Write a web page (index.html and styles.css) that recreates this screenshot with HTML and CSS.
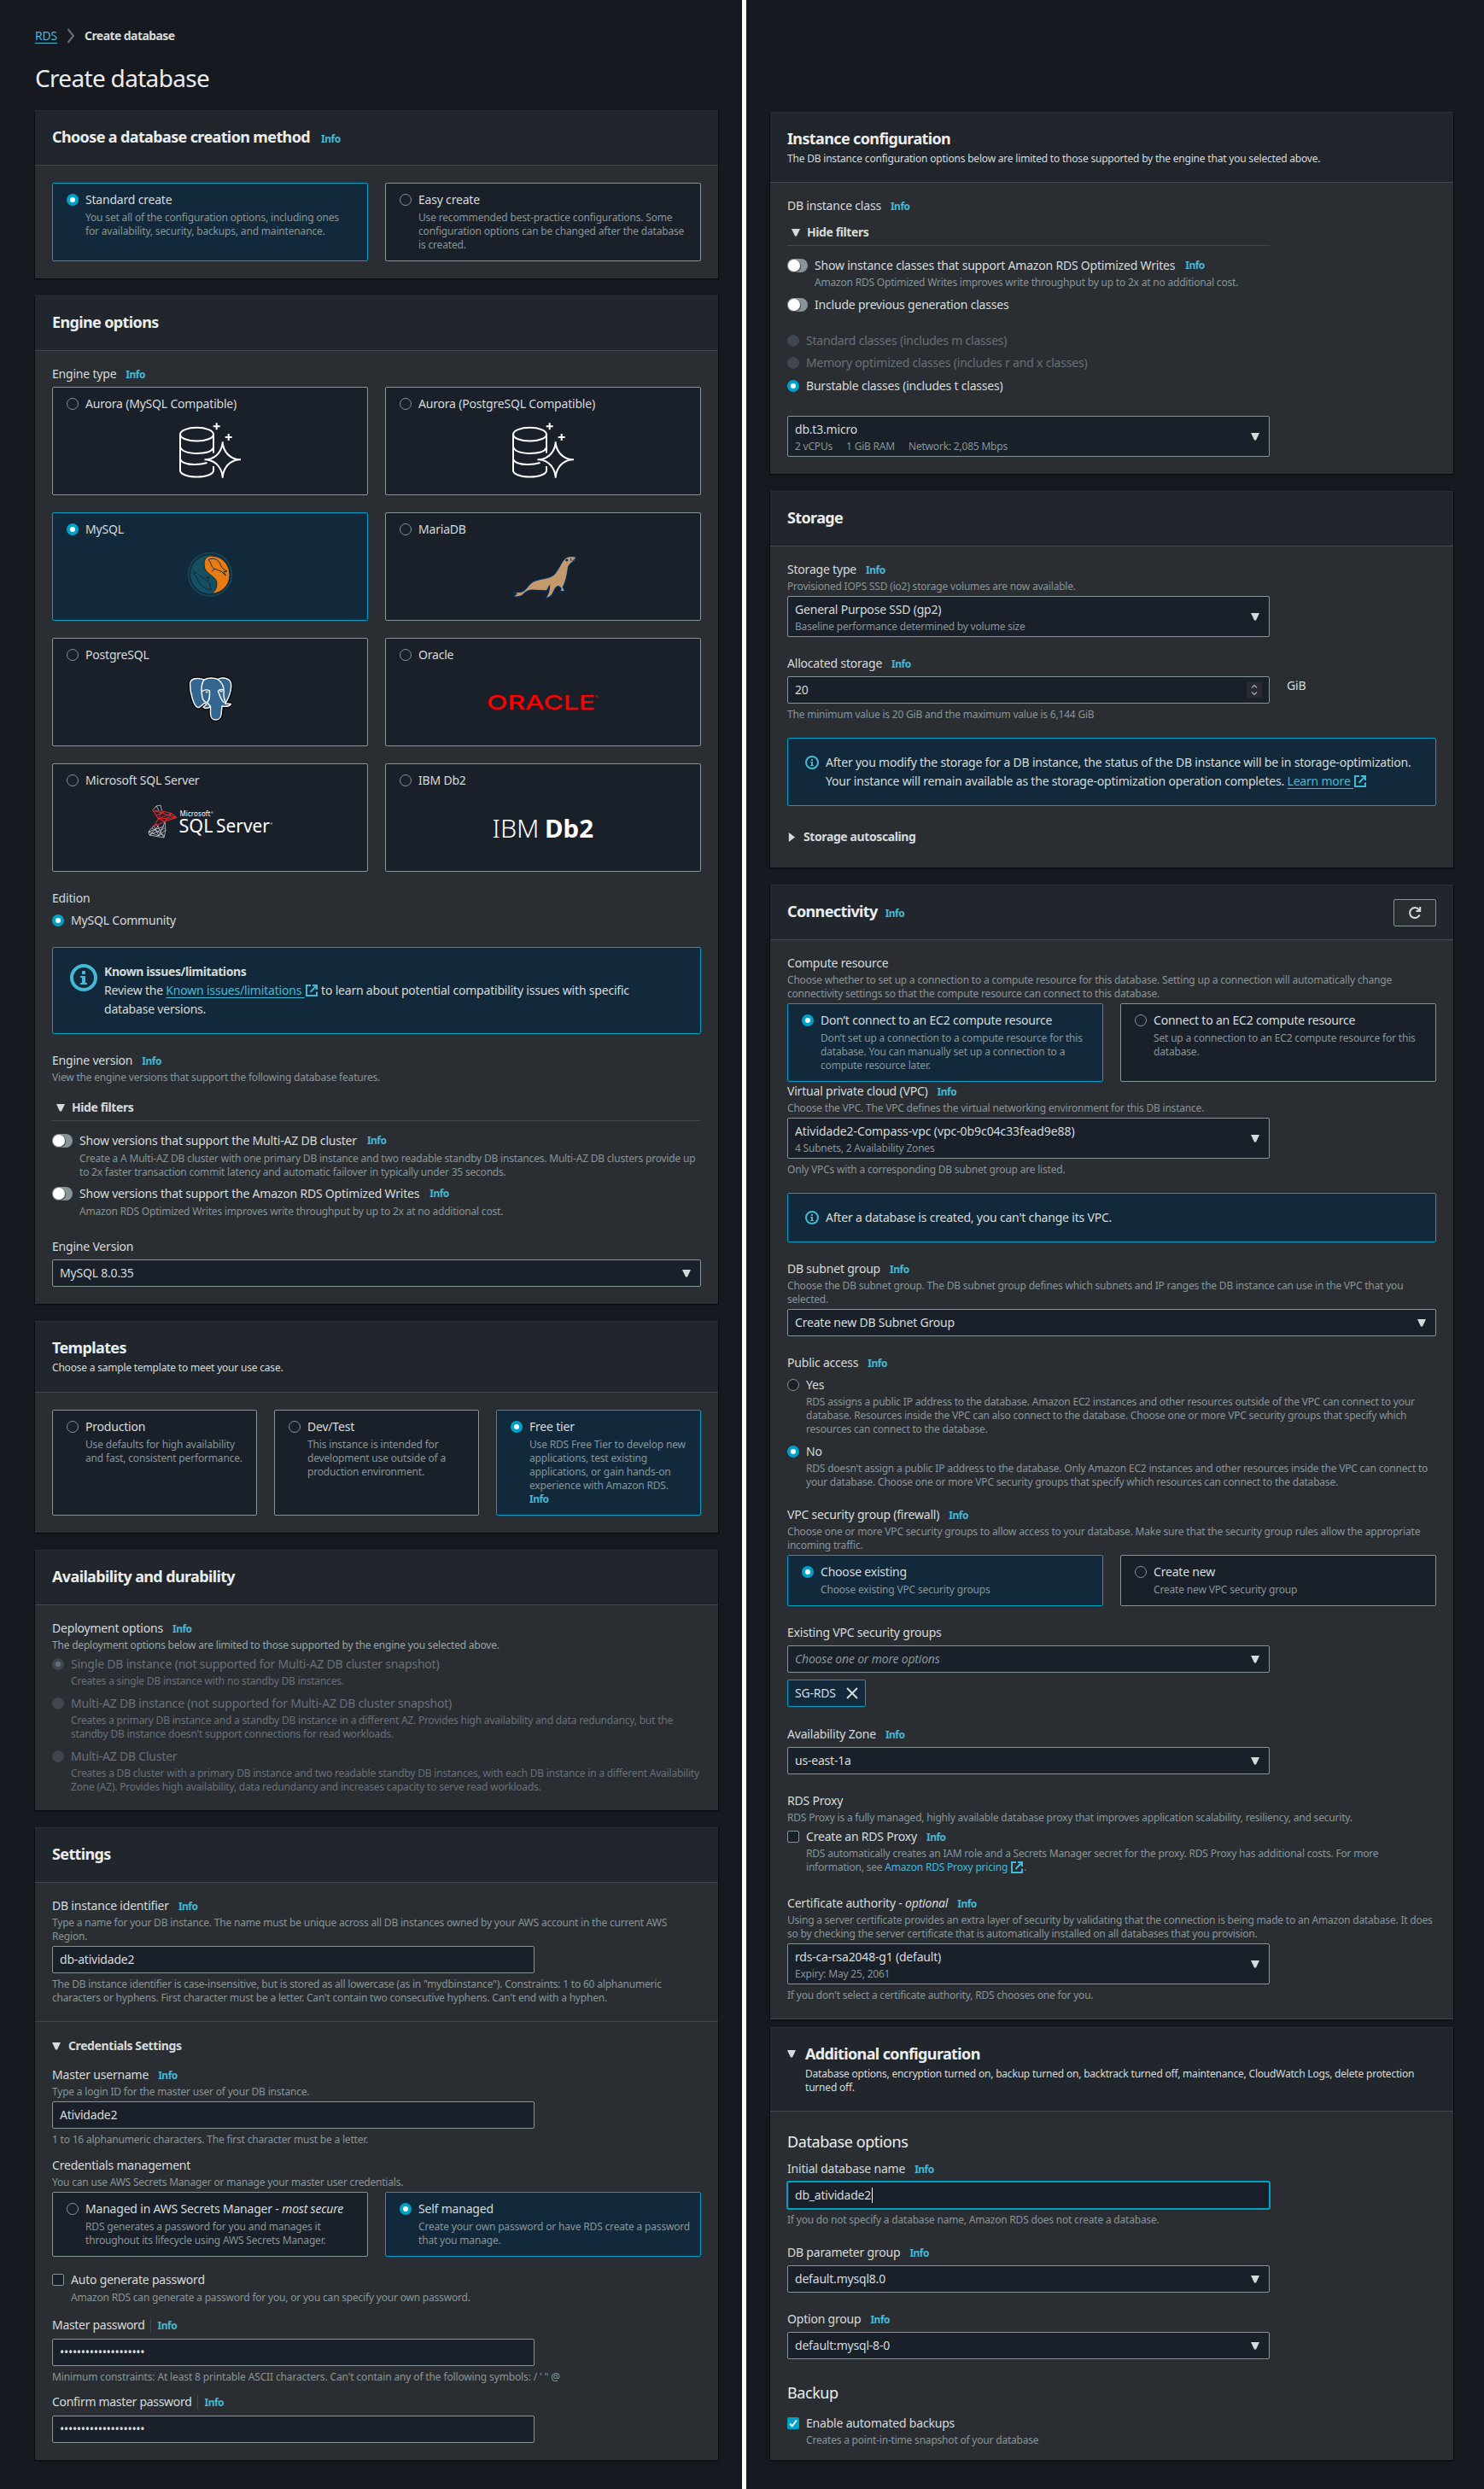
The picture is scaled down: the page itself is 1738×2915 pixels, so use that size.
FILE: index.html
```html
<!DOCTYPE html>
<html lang="en">
<head>
<meta charset="utf-8">
<title>Create database</title>
<link rel="stylesheet" href="styles.css">
</head>
<body>
<svg class="defs" aria-hidden="true">
  <symbol id="ext" viewBox="0 0 16 16"><path d="M7 2H2v12h12V9.5M9 2h5v5M14 2 6.5 10" fill="none" stroke="currentColor" stroke-width="2"/></symbol>
  <symbol id="info" viewBox="0 0 16 16"><circle cx="8" cy="8" r="7" fill="none" stroke="currentColor" stroke-width="2"/><path d="M7 4h2v2H7zM6 7h3v4h1v1H6v-1h1V8H6z" fill="currentColor"/></symbol>
  <symbol id="down" viewBox="0 0 10 9"><path d="M0 0h10L6 8.5H4z" fill="currentColor"/></symbol>
  <symbol id="aurora" viewBox="0 0 160 70">
    <g fill="none" stroke="#fff" stroke-width="2">
      <ellipse cx="64.5" cy="15.7" rx="19.5" ry="7.9"/>
      <path d="M45 15.7V58c0 4 8 7.5 19.500 7.500S84 62 84 58v-5M84 15.700V37.500"/>
      <path d="M45 30.500c2 5 9 7.400 19.500 7.400S82 35.500 84 31.500M45 45c2 4.500 9 6 17 6 6 0 10-.7 14.500-2"/>
      <path d="M94.700 26.500C92.700 37 86.500 43.500 76.500 45.300 86.500 47.100 92.700 54 94.700 64.500 96.700 54 103 47.100 113 45.300 103 43.500 96.700 37 94.700 26.500Z"/>
      <path d="M94.700 24.300v4M94.700 62.500v4.200M73.500 45.300h4M112 45.300h4M87.700 2.300v8M83.700 6.300h8M101.700 15v8M97.700 19h8"/>
    </g>
  </symbol>
</svg>

<main class="column column-left">
  <nav class="crumbs"><a class="link">RDS</a><svg class="chev" viewBox="0 0 10 22"><path d="M1.500 3 8 11 1.500 19" fill="none" stroke="#687078" stroke-width="2"/></svg><b>Create database</b></nav>
  <h1>Create database</h1>

  <section class="panel">
    <header><h2>Choose a database creation method <a class="info">Info</a></h2></header>
    <div class="body">
      <div class="cards two mt-4">
        <div class="card on"><div class="opt"><i class="radio on"></i>Standard create</div><p>You set all of the configuration options, including ones<br>for availability, security, backups, and maintenance.</p></div>
        <div class="card"><div class="opt"><i class="radio"></i>Easy create</div><p>Use recommended best-practice configurations. Some<br>configuration options can be changed after the database<br>is created.</p></div>
      </div>
    </div>
  </section>

  <section class="panel">
    <header><h2>Engine options</h2></header>
    <div class="body">
      <div class="label">Engine type <a class="info">Info</a></div>
      <div class="cards two engines mt-4">
        <div class="card"><div class="opt"><i class="radio"></i>Aurora (MySQL Compatible)</div><svg class="logo"><use href="#aurora"/></svg></div>
        <div class="card"><div class="opt"><i class="radio"></i>Aurora (PostgreSQL Compatible)</div><svg class="logo"><use href="#aurora"/></svg></div>
        <div class="card on"><div class="opt"><i class="radio on"></i>MySQL</div>
          <svg class="logo" viewBox="0 0 160 70">
            <circle cx="80" cy="32.700" r="25.200" fill="#12293b" stroke="#15495c" stroke-width="1.600"/>
            <circle cx="80" cy="32.700" r="22.800" fill="#14505f"/>
            <path d="M81 11C94 11 103 21 103 33 103 46 94 54.500 82 55.300 88 51 90 42.500 85.500 37.500 81 32.500 73 30 73 21 73 15 76 11 81 11Z" fill="#e97b13" stroke="#12293b" stroke-width="1"/>
            <g fill="none" stroke="#12293b" stroke-width="1"><path d="M78 15.500C84 12.500 90 15 92.500 22 94 26 97 27.500 100 29L96 29.500 98.500 34 93.500 29.500C89 27.500 85 26.500 82.500 24 81 20.500 80.500 17.500 78 15.500ZM85 26 82 29.500"/><path d="M81.500 50.500C75 51 68.500 46 66 40 64.500 35 62 33 59.500 31L64 31.500 60.500 28M66 32C71 38 77 38.500 79.500 44 80 47 80.500 49 81.500 50.500M75 37.500 78.500 35.500 77.500 40"/></g>
          </svg></div>
        <div class="card"><div class="opt"><i class="radio"></i>MariaDB</div>
          <svg class="logo" viewBox="0 0 160 70">
            <path d="M118.700 12 115 11.500C111 11 107 12 104 15.500 100 20.500 98 28 92.300 33.300 88 37 82 37.500 75.700 38.500 70 39.500 66 42 63 45.500 60 49.500 58 52.500 54.500 53L43.700 53.500 49 55.500 44.700 58.300C48 60 53 59 56 57 59 54 62 51.500 66 51.300L84 52C86 51 86.500 48 87.500 46 87.500 53 85.500 57 82.300 60.700 87 60.500 91 57 92.500 53 94 49 95 47.500 98 46.500L101 49 100 52.700H105.700L103.500 47.500C107 41 108.500 33 109.500 25 110 21 113 19 117.500 16.500Z" fill="#c49a6c" stroke="#002b64" stroke-width="1.400" stroke-linejoin="round"/>
            <circle cx="107.800" cy="16" r="1.600" fill="#11264a"/><path d="M117 11.500 119 13.500 114 17.500M112.500 13.500 113 17" fill="none" stroke="#12356c" stroke-width="1"/>
          </svg></div>
        <div class="card"><div class="opt"><i class="radio"></i>PostgreSQL</div>
          <svg class="logo" viewBox="0 0 160 70">
            <g stroke-linejoin="round" stroke-linecap="round">
              <path d="M73 9C66 6.500 57 6.500 56.500 14 56.500 25 61 40 65.500 41.500 68 42.500 70 39 73.500 36.500L76 38 72 41C74 43.500 78 42.500 80.500 40.500V49C80.500 58.500 92 58 93 50L94 40C99 41 103 39.500 104.500 37.500L98 37C102 30 105.500 20 104.500 13.500 103 6 93 6 89 8.500 84 6.500 78 6.500 73 9Z" fill="#336791" stroke="#000" stroke-width="4"/>
              <path d="M73 9C66 6.500 57 6.500 56.500 14 56.500 25 61 40 65.500 41.500 68 42.500 70 39 73.500 36.500L76 38 72 41C74 43.500 78 42.500 80.500 40.500V49C80.500 58.500 92 58 93 50L94 40C99 41 103 39.500 104.500 37.500L98 37C102 30 105.500 20 104.500 13.500 103 6 93 6 89 8.500 84 6.500 78 6.500 73 9Z" fill="#336791" stroke="#fff" stroke-width="1.400"/>
              <path d="M73 9C69 15 70 25 71 30 72 34 75 36 76.500 35.500 80 33 79.500 28 79.500 22 77 20.500 74 20.500 71 22.500M89 8.500C95 13 97 19 96 26 95.500 30 98 33 98 37M96 21C93 20 91 20.500 89.500 22.500 91 27 93 33 96 35.500M76.500 35.500 80.500 40.500M75.500 23.500h1.500M92.500 22.800h1.500" fill="none" stroke="#fff" stroke-width="1.400"/>
            </g>
          </svg></div>
        <div class="card"><div class="opt"><i class="radio"></i>Oracle</div>
          <svg class="logo" viewBox="0 0 160 70"><text class="oracle" x="14" y="44" textLength="127" lengthAdjust="spacingAndGlyphs">ORACLE</text><text class="oracle reg" x="141" y="31">®</text></svg></div>
        <div class="card"><div class="opt"><i class="radio"></i>Microsoft SQL Server</div>
          <svg class="logo" viewBox="0 0 160 70">
            <g fill="none" stroke="#c9ced2" stroke-width=".8"><path d="M13.500 14 17 10 22 9 23.500 15M17 10l3 5M14 33 8 40 9 44 26 47 28 38 27 28M14 33l6 12M8 40l18-6M9 44l18-8M20 33 9 44M26 47 17 31M12 36l15 9M27 29 20 45M8 40l12 5 8-7"/></g>
            <g fill="none" stroke="#e0262d" stroke-width="1.100"><path d="M13 15 40.500 23.500 27 28 14 34 19.500 25ZM13 15 24 16 35 18.500 40.500 23.500M24 16 19.500 25 35 18.500M19.500 25 27 28 35 18.500M19.500 25l20-1.500M17 21l9-4"/></g>
            <text class="ms" x="44.500" y="22.300" textLength="36">Microsoft</text><text class="ms reg" x="81" y="19">®</text>
            <text class="sql" x="43.500" y="41.300" textLength="40" lengthAdjust="spacingAndGlyphs">SQL</text><text class="sql" x="87" y="41.300" textLength="63" lengthAdjust="spacingAndGlyphs">Server</text><text class="ms reg" x="150.500" y="32">®</text>
          </svg></div>
        <div class="card"><div class="opt"><i class="radio"></i>IBM Db2</div>
          <svg class="logo" viewBox="0 0 160 70"><text class="ibm" x="20.500" y="46.700" textLength="55" lengthAdjust="spacingAndGlyphs">IBM</text><text class="ibm strong" x="82" y="46.700" textLength="57" lengthAdjust="spacingAndGlyphs">Db2</text></svg></div>
      </div>
      <div class="label mt-20">Edition</div>
      <div class="opt mt-3"><i class="radio on"></i>MySQL Community</div>
      <div class="alert mt-21"><svg class="ic big"><use href="#info"/></svg><div><b>Known issues/limitations</b><br>Review the <a class="link">Known issues/limitations </a><svg class="ext"><use href="#ext"/></svg> to learn about potential compatibility issues with specific<br>database versions.</div></div>
      <div class="label mt-20">Engine version <a class="info">Info</a></div>
      <p class="desc">View the engine versions that support the following database features.</p>
      <div class="filters mt-17"><svg class="tri"><use href="#down"/></svg>Hide filters</div>
      <div class="toggle-row mt-11"><i class="toggle"></i>Show versions that support the Multi-AZ DB cluster <a class="info">Info</a></div>
      <p class="desc in-toggle mt-2">Create a A Multi-AZ DB cluster with one primary DB instance and two readable standby DB instances. Multi-AZ DB clusters provide up<br>to 2x faster transaction commit latency and automatic failover in typically under 35 seconds.</p>
      <div class="toggle-row mt-6"><i class="toggle"></i>Show versions that support the Amazon RDS Optimized Writes <a class="info">Info</a></div>
      <p class="desc in-toggle mt-2">Amazon RDS Optimized Writes improves write throughput by up to 2x at no additional cost.</p>
      <div class="label mt-23">Engine Version</div>
      <div class="field wide mt-4">MySQL 8.0.35<svg class="tri"><use href="#down"/></svg></div>
    </div>
  </section>

  <section class="panel">
    <header class="tall"><h2>Templates</h2><p>Choose a sample template to meet your use case.</p></header>
    <div class="body">
      <div class="cards three mt-4">
        <div class="card"><div class="opt"><i class="radio"></i>Production</div><p>Use defaults for high availability<br>and fast, consistent performance.</p></div>
        <div class="card"><div class="opt"><i class="radio"></i>Dev/Test</div><p>This instance is intended for<br>development use outside of a<br>production environment.</p></div>
        <div class="card on"><div class="opt"><i class="radio on"></i>Free tier</div><p>Use RDS Free Tier to develop new<br>applications, test existing<br>applications, or gain hands-on<br>experience with Amazon RDS.<br><a class="info">Info</a></p></div>
      </div>
    </div>
  </section>

  <section class="panel">
    <header><h2>Availability and durability</h2></header>
    <div class="body">
      <div class="label">Deployment options <a class="info">Info</a></div>
      <p class="desc light">The deployment options below are limited to those supported by the engine you selected above.</p>
      <div class="opt off mt-3"><i class="radio off picked"></i>Single DB instance (not supported for Multi-AZ DB cluster snapshot)</div>
      <p class="desc off in-opt mt-1">Creates a single DB instance with no standby DB instances.</p>
      <div class="opt off mt-7"><i class="radio off"></i>Multi-AZ DB instance (not supported for Multi-AZ DB cluster snapshot)</div>
      <p class="desc off in-opt mt-1">Creates a primary DB instance and a standby DB instance in a different AZ. Provides high availability and data redundancy, but the<br>standby DB instance doesn't support connections for read workloads.</p>
      <div class="opt off mt-7"><i class="radio off"></i>Multi-AZ DB Cluster</div>
      <p class="desc off in-opt mt-1">Creates a DB cluster with a primary DB instance and two readable standby DB instances, with each DB instance in a different Availability<br>Zone (AZ). Provides high availability, data redundancy and increases capacity to serve read workloads.</p>
    </div>
  </section>

  <section class="panel">
    <header><h2>Settings</h2></header>
    <div class="body">
      <div class="label">DB instance identifier <a class="info">Info</a></div>
      <p class="desc">Type a name for your DB instance. The name must be unique across all DB instances owned by your AWS account in the current AWS<br>Region.</p>
      <div class="field mt-4">db-atividade2</div>
      <p class="desc mt-4">The DB instance identifier is case-insensitive, but is stored as all lowercase (as in "mydbinstance"). Constraints: 1 to 60 alphanumeric<br>characters or hyphens. First character must be a letter. Can't contain two consecutive hyphens. Can't end with a hyphen.</p>
    </div>
    <div class="body split">
      <div class="expander"><svg class="tri"><use href="#down"/></svg>Credentials Settings</div>
      <div class="label mt-12">Master username <a class="info">Info</a></div>
      <p class="desc">Type a login ID for the master user of your DB instance.</p>
      <div class="field mt-4">Atividade2</div>
      <p class="desc mt-4">1 to 16 alphanumeric characters. The first character must be a letter.</p>
      <div class="label mt-12">Credentials management</div>
      <p class="desc">You can use AWS Secrets Manager or manage your master user credentials.</p>
      <div class="cards two mt-4">
        <div class="card"><div class="opt"><i class="radio"></i><span>Managed in AWS Secrets Manager - <em>most secure</em></span></div><p>RDS generates a password for you and manages it<br>throughout its lifecycle using AWS Secrets Manager.</p></div>
        <div class="card on"><div class="opt"><i class="radio on"></i>Self managed</div><p>Create your own password or have RDS create a password<br>that you manage.</p></div>
      </div>
      <div class="opt mt-15"><i class="check"></i>Auto generate password</div>
      <p class="desc in-opt mt-2">Amazon RDS can generate a password for you, or you can specify your own password.</p>
      <div class="label barred mt-14">Master password <a class="info">Info</a></div>
      <div class="field dots mt-5">••••••••••••••••••••</div>
      <p class="desc wider mt-4">Minimum constraints: At least 8 printable ASCII characters. Can't contain any of the following symbols: / ' " @</p>
      <div class="label barred mt-11">Confirm master password <a class="info">Info</a></div>
      <div class="field dots mt-5">••••••••••••••••••••</div>
    </div>
  </section>
</main>

<div class="gutter"></div>

<main class="column column-right">
  <section class="panel">
    <header><h2>Instance configuration</h2><p>The DB instance configuration options below are limited to those supported by the engine that you selected above.</p></header>
    <div class="body">
      <div class="label">DB instance class <a class="info">Info</a></div>
      <div class="filters short mt-9"><svg class="tri"><use href="#down"/></svg>Hide filters</div>
      <div class="toggle-row mt-11"><i class="toggle"></i>Show instance classes that support Amazon RDS Optimized Writes <a class="info">Info</a></div>
      <p class="desc in-toggle mt-1">Amazon RDS Optimized Writes improves write throughput by up to 2x at no additional cost.</p>
      <div class="toggle-row mt-7"><i class="toggle"></i>Include previous generation classes</div>
      <div class="opt off mt-20"><i class="radio off"></i>Standard classes (includes m classes)</div>
      <div class="opt off mt-4"><i class="radio off"></i>Memory optimized classes (includes r and x classes)</div>
      <div class="opt mt-5"><i class="radio on"></i>Burstable classes (includes t classes)</div>
      <div class="field double mt-25"><div>db.t3.micro<p class="desc tags"><span>2 vCPUs</span><span>1 GiB RAM</span><span>Network: 2,085 Mbps</span></p></div><svg class="tri"><use href="#down"/></svg></div>
    </div>
  </section>

  <section class="panel">
    <header><h2>Storage</h2></header>
    <div class="body storage">
      <div class="label">Storage type <a class="info">Info</a></div>
      <p class="desc">Provisioned IOPS SSD (io2) storage volumes are now available.</p>
      <div class="field double mt-4"><div>General Purpose SSD (gp2)<p class="desc">Baseline performance determined by volume size</p></div><svg class="tri"><use href="#down"/></svg></div>
      <div class="label mt-20">Allocated storage <a class="info">Info</a></div>
      <div class="unit-row mt-4"><div class="field">20<span class="spinner"><svg viewBox="0 0 18 18"><path d="M6 6.500 9 3.500l3 3M6 11.500l3 3 3-3" fill="none" stroke="#9a9aa2" stroke-width="1.500"/></svg></span></div><span>GiB</span></div>
      <p class="desc mt-4">The minimum value is 20 GiB and the maximum value is 6,144 GiB</p>
      <div class="alert mt-20"><svg class="ic"><use href="#info"/></svg><div>After you modify the storage for a DB instance, the status of the DB instance will be in storage-optimization.<br>Your instance will remain available as the storage-optimization operation completes. <a class="link">Learn more </a><svg class="ext"><use href="#ext"/></svg></div></div>
      <div class="expander mt-25"><svg class="tri side" viewBox="0 0 11 12"><path d="M2 0 10 6 2 12z" fill="currentColor"/></svg>Storage autoscaling</div>
    </div>
  </section>

  <section class="panel linked">
    <header class="bar"><h2 class="tight">Connectivity <a class="info">Info</a></h2><button class="refresh" aria-label="Refresh"><svg viewBox="0 0 16 16"><path d="M13.600 10.500A6 6 0 1 1 12.800 4.300L14 5.800M14.200 1v5H9.500" fill="none" stroke="currentColor" stroke-width="2"/></svg></button></header>
    <div class="body">
      <div class="label">Compute resource</div>
      <p class="desc">Choose whether to set up a connection to a compute resource for this database. Setting up a connection will automatically change<br>connectivity settings so that the compute resource can connect to this database.</p>
      <div class="cards two mt-4">
        <div class="card on"><div class="opt"><i class="radio on"></i>Don’t connect to an EC2 compute resource</div><p>Don’t set up a connection to a compute resource for this<br>database. You can manually set up a connection to a<br>compute resource later.</p></div>
        <div class="card"><div class="opt"><i class="radio"></i>Connect to an EC2 compute resource</div><p>Set up a connection to an EC2 compute resource for this<br>database.</p></div>
      </div>
      <div class="label">Virtual private cloud (VPC) <a class="info">Info</a></div>
      <p class="desc">Choose the VPC. The VPC defines the virtual networking environment for this DB instance.</p>
      <div class="field double mt-4"><div><span class="ident">Atividade2-Compass-vpc (vpc-0b9c04c33fead9e88)</span><p class="desc">4 Subnets, 2 Availability Zones</p></div><svg class="tri"><use href="#down"/></svg></div>
      <p class="desc mt-4">Only VPCs with a corresponding DB subnet group are listed.</p>
      <div class="alert mt-20"><svg class="ic"><use href="#info"/></svg><div>After a database is created, you can't change its VPC.</div></div>
      <div class="label mt-20">DB subnet group <a class="info">Info</a></div>
      <p class="desc">Choose the DB subnet group. The DB subnet group defines which subnets and IP ranges the DB instance can use in the VPC that you<br>selected.</p>
      <div class="field wide mt-4">Create new DB Subnet Group<svg class="tri"><use href="#down"/></svg></div>
      <div class="label mt-20">Public access <a class="info">Info</a></div>
      <div class="opt mt-3"><i class="radio"></i>Yes</div>
      <p class="desc in-opt mt-1">RDS assigns a public IP address to the database. Amazon EC2 instances and other resources outside of the VPC can connect to your<br>database. Resources inside the VPC can also connect to the database. Choose one or more VPC security groups that specify which<br>resources can connect to the database.</p>
      <div class="opt mt-7"><i class="radio on"></i>No</div>
      <p class="desc in-opt mt-1">RDS doesn't assign a public IP address to the database. Only Amazon EC2 instances and other resources inside the VPC can connect to<br>your database. Choose one or more VPC security groups that specify which resources can connect to the database.</p>
      <div class="label mt-20">VPC security group (firewall) <a class="info">Info</a></div>
      <p class="desc">Choose one or more VPC security groups to allow access to your database. Make sure that the security group rules allow the appropriate<br>incoming traffic.</p>
      <div class="cards two mt-4">
        <div class="card on"><div class="opt"><i class="radio on"></i>Choose existing</div><p>Choose existing VPC security groups</p></div>
        <div class="card"><div class="opt"><i class="radio"></i>Create new</div><p>Create new VPC security group</p></div>
      </div>
      <div class="label mt-20">Existing VPC security groups</div>
      <div class="field mt-4"><em class="placeholder">Choose one or more options</em><svg class="tri"><use href="#down"/></svg></div>
      <div class="token mt-8">SG-RDS<svg viewBox="0 0 14 14"><path d="M1 1l12 12M13 1 1 13" stroke="currentColor" stroke-width="2"/></svg></div>
      <div class="label mt-21">Availability Zone <a class="info">Info</a></div>
      <div class="field mt-4">us-east-1a<svg class="tri"><use href="#down"/></svg></div>
      <div class="label mt-20">RDS Proxy</div>
      <p class="desc">RDS Proxy is a fully managed, highly available database proxy that improves application scalability, resiliency, and security.</p>
      <div class="opt mt-3"><i class="check"></i><span class="label">Create an RDS Proxy <a class="info">Info</a></span></div>
      <p class="desc in-opt mt-1">RDS automatically creates an IAM role and a Secrets Manager secret for the proxy. RDS Proxy has additional costs. For more<br>information, see <a class="plain">Amazon RDS Proxy pricing <svg class="ext"><use href="#ext"/></svg></a>.</p>
      <div class="label mt-24"><span>Certificate authority - <em>optional</em></span> <a class="info">Info</a></div>
      <p class="desc">Using a server certificate provides an extra layer of security by validating that the connection is being made to an Amazon database. It does<br>so by checking the server certificate that is automatically installed on all databases that you provision.</p>
      <div class="field double mt-4"><div>rds-ca-rsa2048-g1 (default)<p class="desc">Expiry: May 25, 2061</p></div><svg class="tri"><use href="#down"/></svg></div>
      <p class="desc mt-4">If you don't select a certificate authority, RDS chooses one for you.</p>
    </div>
  </section>

  <section class="panel">
    <header class="with-tri"><svg class="tri"><use href="#down"/></svg><div><h2>Additional configuration</h2><p>Database options, encryption turned on, backup turned on, backtrack turned off, maintenance, CloudWatch Logs, delete protection<br>turned off.</p></div></header>
    <div class="body additional">
      <h3 class="mt-8">Database options</h3>
      <div class="label mt-10">Initial database name <a class="info">Info</a></div>
      <div class="field focus mt-4">db_atividade2<span class="caret"></span></div>
      <p class="desc mt-4">If you do not specify a database name, Amazon RDS does not create a database.</p>
      <div class="label mt-20">DB parameter group <a class="info">Info</a></div>
      <div class="field mt-4">default.mysql8.0<svg class="tri"><use href="#down"/></svg></div>
      <div class="label mt-20">Option group <a class="info">Info</a></div>
      <div class="field mt-4">default:mysql-8-0<svg class="tri"><use href="#down"/></svg></div>
      <h3 class="mt-28">Backup</h3>
      <div class="opt mt-13"><i class="check on"><svg viewBox="0 0 14 14"><path d="M3 7.500 5.800 10.300 11 3.500" fill="none" stroke="#fff" stroke-width="2"/></svg></i>Enable automated backups</div>
      <p class="desc in-opt mt-1">Creates a point-in-time snapshot of your database</p>
    </div>
  </section>
</main>
</body>
</html>
```
FILE: styles.css
```css
* { box-sizing: border-box; }

body {
  margin: 0;
  display: flex;
  width: 1738px;
  height: 2915px;
  background: #16191f;
  color: #d5dbdb;
  font: 14px/22px "Noto Sans", "Open Sans", sans-serif;
  letter-spacing: -0.2px;
  white-space: nowrap;
}

p, h1, h2, h3 { margin: 0; }
b { letter-spacing: -0.4px; }
svg { flex: none; }
.defs { position: absolute; width: 0; height: 0; }

.column-left { width: 869px; padding: 31px 28px 0 41px; }
.column-right { width: 864px; padding: 131px 36px 0 28px; }
.gutter { width: 5px; background: #fff; }

.crumbs { display: flex; align-items: center; height: 22px; }
.crumbs b { letter-spacing: -0.57px; }
.chev { width: 10px; height: 22px; margin: 0 11px 0 11px; }
h1 {
  margin: 20px 0 20px;
  font-size: 28px;
  line-height: 36px;
  font-weight: 400;
  letter-spacing: -0.68px;
  color: #eaeded;
}

/* Panels */
.panel {
  margin-bottom: 20px;
  background: #2a2e33;
  box-shadow: 0 1px 1px #0a0c0f, 1px 1px 1px rgba(0, 0, 0, .45), -1px 1px 1px rgba(0, 0, 0, .45);
}
.panel header {
  padding: 19px 20px 22px;
  background: #21252c;
  border-top: 1px solid #2a2e33;
  border-bottom: 1px solid #414750;
}
.panel header:has(p) { padding-bottom: 19px; }
.panel header.tall { padding-bottom: 20px; }
.panel header p {
  margin-top: 5px;
  font-size: 12px;
  line-height: 16px;
  letter-spacing: -0.2px;
}
.panel header.bar {
  display: flex;
  justify-content: space-between;
  align-items: center;
  height: 65px;
  padding: 0 20px;
}
.panel header.with-tri { display: flex; gap: 11px; }
.with-tri .tri { margin-top: 7px; }
h2 {
  display: flex;
  align-items: baseline;
  gap: 13px;
  font-size: 18px;
  line-height: 22px;
  letter-spacing: -0.63px;
  color: #eaeded;
}
h2.tight { gap: 9px; padding-bottom: 3px; }
h3 { font-size: 18px; line-height: 22px; font-weight: 400; letter-spacing: -0.42px; color: #eaeded; }
.body { padding: 16px 20px 20px; }
.body.split { padding-top: 17px; border-top: 1px solid #414750; }
.body.storage { padding-bottom: 25px; }
.body.additional { padding-bottom: 16px; }
.linked { margin-bottom: 9px; border-bottom: 1px solid #414750; }

/* Text */
.label { display: flex; align-items: baseline; gap: 11px; height: 22px; }
.label.barred { align-items: center; gap: 6px; letter-spacing: -0.3px; }
.label.barred .info { display: flex; align-items: center; padding-top: 1px; }
.label.barred .info::before { content: ""; width: 1px; height: 17px; margin-right: 8px; background: #414750; }
.info { font-size: 12px; line-height: 16px; font-weight: 700; letter-spacing: -0.5px; color: #44b9d6; }
.desc {
  margin-bottom: -1px;
  padding-top: 1px;
  font-size: 12px;
  line-height: 16px;
  letter-spacing: -0.2px;
  color: #879596;
}
.desc.light { color: #95a5a6; }
.desc.wider { letter-spacing: -0.14px; }
.off, .desc.off { color: #687078; }
.in-opt { padding-left: 22px; }
.in-toggle { padding-left: 32px; }
.link { color: #44b9d6; text-decoration: underline; text-decoration-thickness: 1px; text-underline-offset: 3px; white-space: pre; }
.plain { color: #44b9d6; }
.ident { letter-spacing: -0.08px; }
.ext { width: 16px; height: 16px; color: #44b9d6; vertical-align: -3px; }
.plain .ext { vertical-align: -4px; margin-top: -4px; }

/* Choices */
.opt, .toggle-row { display: flex; align-items: center; gap: 8px; height: 22px; }
.opt { padding-top: 2px; }
.toggle-row { padding-top: 1px; }
.toggle-row .info { margin-left: 4px; }
.radio, .check { flex: none; width: 14px; height: 14px; border: 1px solid #879596; background: #1a2029; }
.radio { border-radius: 50%; }
.check { border-radius: 2px; }
.radio.on { border: 4px solid #00a1c9; background: #fff; }
.radio.off { border-color: #414750; background: #414750; }
.radio.off.picked { border-width: 4px; background: #687078; }
.check.on { border: 0; background: #00a1c9; }
.check svg { display: block; width: 14px; height: 14px; }
.toggle { flex: none; width: 24px; height: 16px; border-radius: 8px; background: #879596; }
.toggle::before {
  content: "";
  display: block;
  width: 14px;
  height: 14px;
  margin: 1px;
  border-radius: 50%;
  background: #fff;
  box-shadow: 1px 1px 1px rgba(0, 0, 0, .5);
}

.cards { display: grid; gap: 20px; }
.two { grid-template-columns: repeat(2, minmax(0, 1fr)); }
.three { grid-template-columns: repeat(3, minmax(0, 1fr)); }
.card { padding: 7px 16px 11px; background: #1a2029; border: 1px solid #879596; border-radius: 2px; }
.card.on { background: #12293b; border-color: #00a1c9; }
.card p { margin: 3px 0 -1px 22px; font-size: 12px; line-height: 16px; letter-spacing: -0.17px; color: #879596; }
.engines .card { height: 127px; }
.logo { display: block; width: 160px; height: 70px; margin: 10px auto 0; }
.oracle { font: 500 23.4px Inter, sans-serif; letter-spacing: 0; fill: #f00; }
.oracle.reg { font-size: 5px; }
.ms { font: 400 8px "Noto Sans", sans-serif; letter-spacing: 0; fill: #fff; }
.ms.reg { font-size: 3px; }
.sql { font: 400 21.5px "Noto Sans", sans-serif; letter-spacing: 0; fill: #fff; }
.ibm { font: 300 29px "Noto Sans", sans-serif; letter-spacing: 0; fill: #fff; }
.ibm.strong { font-weight: 700; }

/* Form controls */
.tri { width: 10px; height: 9px; color: #d5dbdb; }
.field {
  display: flex;
  align-items: center;
  justify-content: space-between;
  width: 565px;
  height: 32px;
  padding: 0 11px 0 8px;
  background: #1a2029;
  border: 1px solid #879596;
  border-radius: 2px;
}
.field.wide { width: auto; }
.field.double { height: 48px; }
.field.focus { justify-content: flex-start; border-color: #00a1c9; box-shadow: 0 0 0 1px #00a1c9; }
.caret { width: 1px; height: 18px; margin-left: 1px; background: #fff; }
.dots { letter-spacing: -0.3px; }
.placeholder { color: #879596; }
.tags { display: flex; gap: 16px; }
.unit-row { display: flex; gap: 20px; }
.spinner { width: 18px; height: 18px; margin-right: -3px; background: #2b2a33; }
.spinner svg { display: block; width: 18px; height: 18px; }
.filters {
  display: flex;
  align-items: center;
  gap: 8px;
  height: 27px;
  padding: 0 0 4px 5px;
  border-bottom: 1px solid #414750;
  font-weight: 700;
  letter-spacing: -0.4px;
}
.filters.short { width: 565px; }
.expander { display: flex; align-items: center; gap: 9px; height: 22px; font-weight: 700; letter-spacing: -0.4px; }
.tri.side { width: 10px; height: 11px; }
.alert {
  display: flex;
  gap: 8px;
  padding: 17px 20px;
  background: #12293b;
  border: 1px solid #00a1c9;
  border-radius: 2px;
}
.ic { width: 16px; height: 16px; margin-top: 3px; color: #44b9d6; }
.ic.big { width: 32px; height: 32px; margin-top: 2px; }
.refresh {
  display: flex;
  align-items: center;
  justify-content: center;
  width: 50px;
  height: 32px;
  padding: 0;
  background: #2a2e33;
  border: 1px solid #879596;
  border-radius: 2px;
  color: #d5dbdb;
}
.refresh svg { width: 16px; height: 16px; }
.token {
  display: flex;
  align-items: center;
  justify-content: space-between;
  width: 92px;
  height: 32px;
  padding: 0 8px;
  background: #12293b;
  border: 1px solid #00a1c9;
  border-radius: 2px;
}
.token svg { width: 14px; height: 14px; }

/* Vertical rhythm */
.mt-1 { margin-top: 1px; }
.mt-2 { margin-top: 2px; }
.mt-3 { margin-top: 3px; }
.mt-4 { margin-top: 4px; }
.mt-5 { margin-top: 5px; }
.mt-6 { margin-top: 6px; }
.mt-7 { margin-top: 7px; }
.mt-8 { margin-top: 8px; }
.mt-9 { margin-top: 9px; }
.mt-10 { margin-top: 10px; }
.mt-11 { margin-top: 11px; }
.mt-12 { margin-top: 12px; }
.mt-13 { margin-top: 13px; }
.mt-14 { margin-top: 14px; }
.mt-15 { margin-top: 15px; }
.mt-17 { margin-top: 17px; }
.mt-20 { margin-top: 20px; }
.mt-21 { margin-top: 21px; }
.mt-23 { margin-top: 23px; }
.mt-24 { margin-top: 24px; }
.mt-25 { margin-top: 25px; }
.mt-28 { margin-top: 28px; }
```
